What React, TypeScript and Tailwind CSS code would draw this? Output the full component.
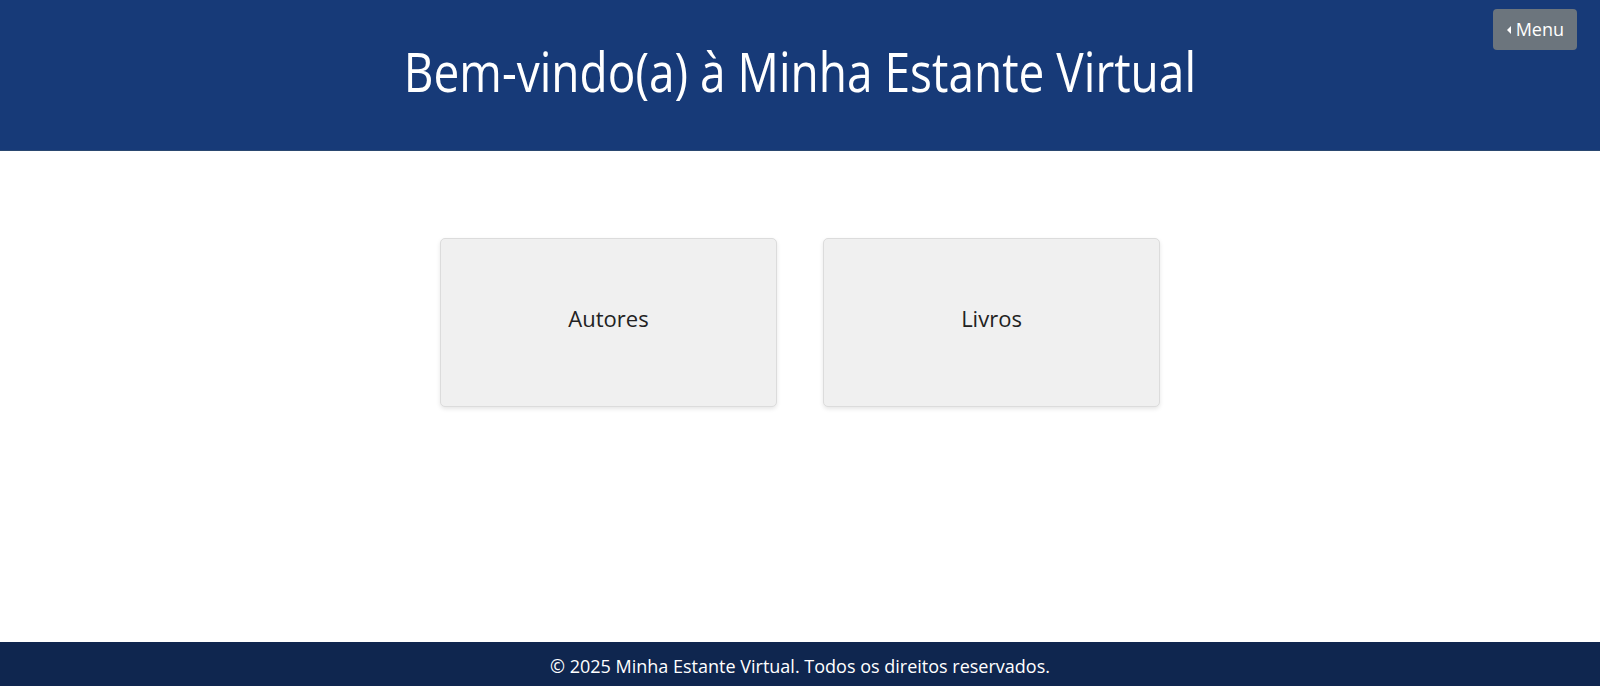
import React from "react";

export default function App() {
  return (
    <div className="min-h-screen flex flex-col bg-white" style={{ fontFamily: '"Open Sans", sans-serif' }}>
      <header className="relative h-[151px] bg-[#173a78] flex items-center justify-center border-b border-[#2a4770]">
        <h1 className="text-[54px] text-white leading-none pb-[8px] whitespace-nowrap scale-x-[0.852]">Bem-vindo(a) à Minha Estante Virtual</h1>
        <button className="absolute top-[9px] right-[23px] h-[41px] px-[13px] rounded-[4px] bg-[#6c757d] text-white text-[18px] flex items-center gap-[4px]">
          <svg width="6" height="10" viewBox="0 0 6 10"><path d="M5 1 L1 5 L5 9 Z" fill="white" /></svg>
          Menu
        </button>
      </header>
      <main className="flex-1 flex justify-center items-start pt-[87px] gap-[46px]">
        <div className="w-[337px] h-[169px] bg-[#f0f0f0] border border-[#dcdcdc] rounded-[5px] shadow-[0_2px_4px_rgba(0,0,0,0.1)] flex items-center justify-center pb-[8px] text-[22px] text-[#222]">Autores</div>
        <div className="w-[337px] h-[169px] bg-[#f0f0f0] border border-[#dcdcdc] rounded-[5px] shadow-[0_2px_4px_rgba(0,0,0,0.1)] flex items-center justify-center pb-[8px] text-[22px] text-[#222]">Livros</div>
      </main>
      <footer className="h-[44px] bg-[#0f264f] text-white text-[18px] flex items-center justify-center pt-[4px]">
        © 2025 Minha Estante Virtual. Todos os direitos reservados.
      </footer>
    </div>
  );
}
